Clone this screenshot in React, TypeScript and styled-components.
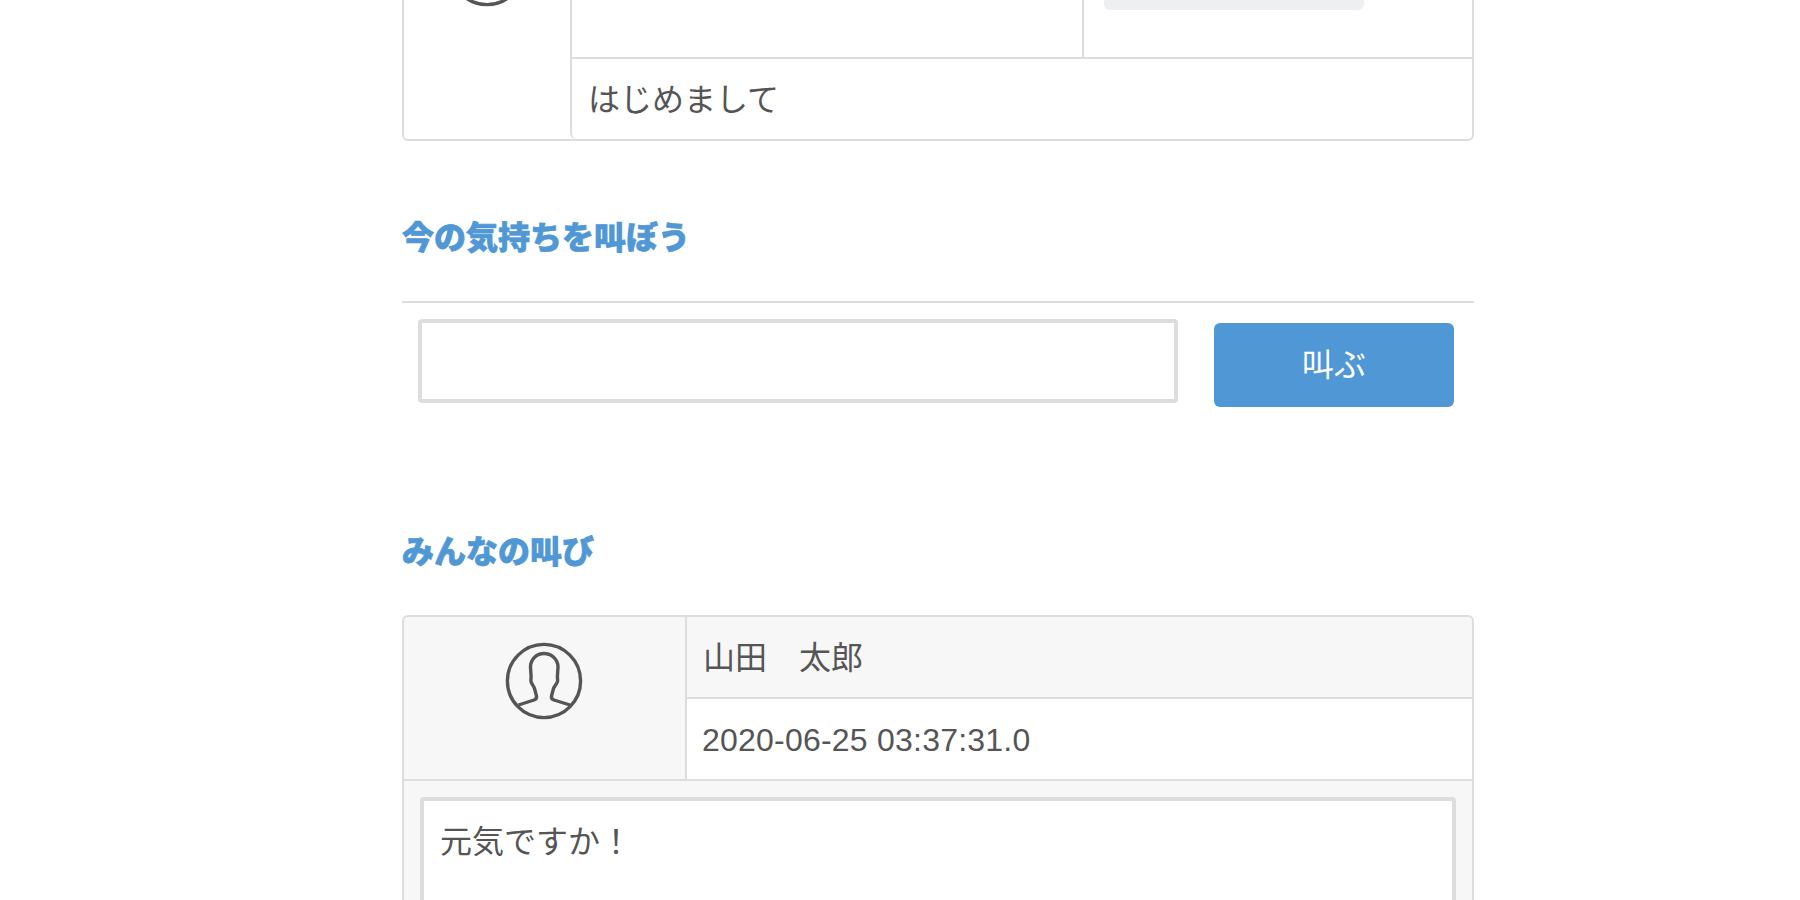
import styled, { createGlobalStyle } from 'styled-components';

const GlobalStyle = createGlobalStyle`
  html, body {
    margin: 0;
    padding: 0;
    height: 900px;
    overflow: hidden;
    background: #fff;
  }
  * {
    box-sizing: border-box;
  }
  body {
    font-family: 'Liberation Sans', 'Noto Sans CJK JP', sans-serif;
    font-size: 32px;
    color: #555;
  }
`;

function AvatarIcon() {
  return (
    <svg width="78" height="78" viewBox="0 0 78 78" fill="none" stroke="#555" strokeWidth="3.4" strokeLinejoin="round">
      <circle cx="39" cy="39" r="36.600" />
      <path d="M13.500 63 L29 58 Q32 57 31.500 54 L29.500 46.500 C28.800 44 26.800 42.500 26 39.500 C25.500 37.500 26.500 35.500 26 33 L25.500 25 C25.500 17 32 11.500 39 11.500 C46 11.500 53 17 53 25 L52.500 33 C52 35.500 53 37.500 52.500 39.500 C51.500 42.500 49.500 44 48.500 46.500 L46.500 54 Q46 57 49 58 L65 63" />
    </svg>
  );
}

export default function App() {
  return (
    <>
      <GlobalStyle />
      <Page>
        <ProfileCard>
          <ProfileAvatar>
            <AvatarIcon />
          </ProfileAvatar>
          <ProfileBody>
            <ProfileRow>
              <ProfileCell />
              <ProfileSide>
                <GrayBar />
              </ProfileSide>
            </ProfileRow>
            <ProfileMessage>はじめまして</ProfileMessage>
          </ProfileBody>
        </ProfileCard>

        <RuledTitle>今の気持ちを叫ぼう</RuledTitle>
        <ShoutForm>
          <ShoutInput />
          <ShoutButton type="button">叫ぶ</ShoutButton>
        </ShoutForm>

        <PlainTitle>みんなの叫び</PlainTitle>
        <ShoutCard>
          <ShoutHeader>
            <ShoutAvatar>
              <AvatarIcon />
            </ShoutAvatar>
            <ShoutMeta>
              <ShoutName>山田　太郎</ShoutName>
              <ShoutDate>2020-06-25 03:37:31.0</ShoutDate>
            </ShoutMeta>
          </ShoutHeader>
          <ShoutBody>
            <MessageBox>元気ですか！</MessageBox>
          </ShoutBody>
        </ShoutCard>
      </Page>
    </>
  );
}

const Page = styled.div`
  width: 1072px;
  margin-left: 402px;
`;

const ProfileCard = styled.div`
  display: flex;
  height: 241px;
  margin-top: -100px;
  border: 2px solid #ddd;
  border-radius: 6px;
`;

const ProfileAvatar = styled.div`
  width: 166px;
  flex-shrink: 0;
  padding-top: 27px;
  display: flex;
  justify-content: center;
  align-items: flex-start;
`;

const ProfileBody = styled.div`
  flex: 1;
  display: flex;
  flex-direction: column;
  border-left: 2px solid #ddd;
  border-bottom-left-radius: 6px;
`;

const ProfileRow = styled.div`
  display: flex;
  height: 157px;
  border-bottom: 2px solid #ddd;
`;

const ProfileCell = styled.div`
  width: 512px;
  border-right: 2px solid #ddd;
`;

const ProfileSide = styled.div`
  flex: 1;
  padding: 68px 20px 0;
`;

const GrayBar = styled.div`
  width: 260px;
  height: 40px;
  background: #ecf0f1;
  border-radius: 6px;
`;

const ProfileMessage = styled.div`
  flex: 1;
  display: flex;
  align-items: center;
  padding: 0 0 4px 16px;
`;

const Title = styled.h2`
  margin: 0;
  font-size: 32px;
  font-weight: 900;
  line-height: 40px;
  color: #5097d5;
  -webkit-text-stroke: 0.7px #5097d5;
`;

const RuledTitle = styled(Title)`
  margin-top: 77px;
  padding-bottom: 43px;
  border-bottom: 2px solid #ddd;
`;

const PlainTitle = styled(Title)`
  margin-top: 125px;
  margin-bottom: 43px;
`;

const ShoutForm = styled.div`
  display: flex;
  align-items: flex-start;
  gap: 36px;
  padding-left: 16px;
`;

const ShoutInput = styled.input`
  width: 760px;
  height: 84px;
  margin-top: 16px;
  border: 4px solid #ddd;
  border-radius: 4px;
  background: #fff;
  outline: none;
`;

const ShoutButton = styled.button`
  width: 240px;
  height: 84px;
  margin-top: 20px;
  border: 0;
  border-radius: 6px;
  background: #5097d5;
  color: #fff;
  font: inherit;
  padding: 0 0 6px;
`;

const ShoutCard = styled.div`
  border: 2px solid #ddd;
  border-radius: 6px;
  background: #f7f7f7;
`;

const ShoutHeader = styled.div`
  display: flex;
  height: 164px;
  border-bottom: 2px solid #ddd;
`;

const ShoutAvatar = styled.div`
  width: 283px;
  flex-shrink: 0;
  padding-top: 25px;
  padding-right: 2px;
  display: flex;
  justify-content: center;
  align-items: flex-start;
  border-right: 2px solid #ddd;
`;

const ShoutMeta = styled.div`
  flex: 1;
  display: flex;
  flex-direction: column;
`;

const ShoutName = styled.div`
  height: 82px;
  display: flex;
  align-items: center;
  padding: 0 0 4px 16px;
  border-bottom: 2px solid #ddd;
`;

const ShoutDate = styled.div`
  flex: 1;
  display: flex;
  align-items: center;
  padding: 2px 0 0 15px;
  letter-spacing: 0.22px;
  background: #fff;
`;

const ShoutBody = styled.div`
  padding: 16px;
`;

const MessageBox = styled.div`
  height: 300px;
  padding: 21px 16px;
  border: 4px solid #ddd;
  border-radius: 4px;
  background: #fff;
  line-height: 40px;
`;
